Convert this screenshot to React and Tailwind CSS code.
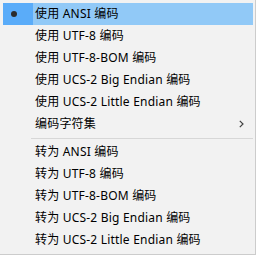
import React from "react";

const groupA = [
  { t: "使用 ANSI 编码", active: true },
  { t: "使用 UTF-8 编码" },
  { t: "使用 UTF-8-BOM 编码" },
  { t: "使用 UCS-2 Big Endian 编码" },
  { t: "使用 UCS-2 Little Endian 编码" },
  { t: "编码字符集", sub: true },
];
const groupB = [
  "转为 ANSI 编码",
  "转为 UTF-8 编码",
  "转为 UTF-8-BOM 编码",
  "转为 UCS-2 Big Endian 编码",
  "转为 UCS-2 Little Endian 编码",
];

function Item({ t, active, sub }) {
  return (
    <div className={"flex h-[22px] items-center " + (active ? "bg-[#91c9f7]" : "")}>
      <div className={"flex h-full w-[30px] shrink-0 items-center " + (active ? "bg-[#5aacf9]" : "")}>
        {active && <div className="ml-[8px] h-[6px] w-[6px] rounded-full bg-[#2b2b2b]" />}
      </div>
      <div className="ml-[2px] flex-1 whitespace-nowrap text-[12px] leading-none tracking-[0.2px] text-black">{t}</div>
      {sub && (
        <svg width="5" height="8" viewBox="0 0 5 8" className="mr-[9px]">
          <path d="M0.8 0.8 L4 4 L0.8 7.2" fill="none" stroke="#404040" strokeWidth="1.2" />
        </svg>
      )}
    </div>
  );
}

export default function App() {
  return (
    <div
      className="box-border h-[255px] w-[256px] border-b border-r border-[#cccccc] bg-[#f2f2f2] pb-[3px] pl-[3px] pr-[2px] pt-[3px]"
      style={{ fontFamily: '"Noto Sans", "Noto Sans CJK SC", sans-serif' }}
    >
      {groupA.map((g) => (
        <Item key={g.t} {...g} />
      ))}
      <div className="h-[6px] pl-[28px] pt-[3px]">
        <div className="h-px bg-[#d7d7d7]" />
      </div>
      {groupB.map((t) => (
        <Item key={t} t={t} />
      ))}
    </div>
  );
}
